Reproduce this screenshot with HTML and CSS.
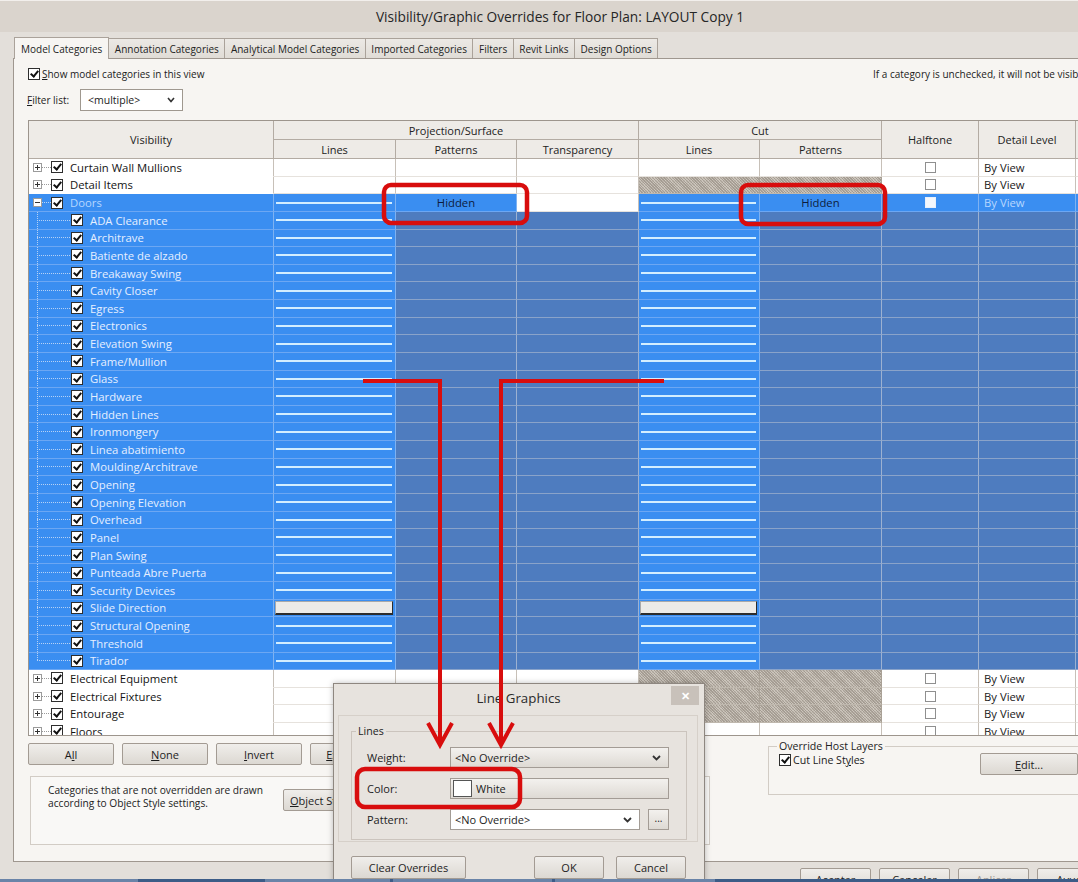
FILE: index.html
```html
<!DOCTYPE html>
<html>
<head>
<meta charset="utf-8">
<title>Visibility/Graphic Overrides</title>
<link rel="stylesheet" href="styles.css">
</head>
<body>
<div class="win">
  <div class="titlebar">Visibility/Graphic Overrides for Floor Plan: LAYOUT Copy 1</div>
  <div class="frame">
    <div class="tabs">
      <div class="tab active">Model Categories</div>
      <div class="tab">Annotation Categories</div>
      <div class="tab">Analytical Model Categories</div>
      <div class="tab">Imported Categories</div>
      <div class="tab">Filters</div>
      <div class="tab">Revit Links</div>
      <div class="tab">Design Options</div>
    </div>
    <div class="panel">
      <div class="toprow">
        <div class="showchk"><i class="cb"></i><span><u>S</u>how model categories in this view</span></div>
        <span class="note">If a category is unchecked, it will not be visible in the view.</span>
      </div>
      <div class="filter">
        <span class="flabel"><u>F</u>ilter list:</span>
        <div class="select"><span>&lt;multiple&gt;</span><svg class="chev" width="8" height="6" viewBox="0 0 8 6"><polyline points="1,1 4,4.5 7,1" fill="none" stroke="#333" stroke-width="1.6"/></svg></div>
      </div>
      <div class="grid">
        <div class="ghead">
          <div class="hc h-vis">Visibility</div>
          <div class="hc h-proj">Projection/Surface</div>
          <div class="hc h-cut">Cut</div>
          <div class="hc h-half">Halftone</div>
          <div class="hc h-det">Detail Level</div>
          <div class="hc h-ext"></div>
          <div class="hc h-l1">Lines</div>
          <div class="hc h-p1">Patterns</div>
          <div class="hc h-t1">Transparency</div>
          <div class="hc h-l2">Lines</div>
          <div class="hc h-p2">Patterns</div>
        </div>
        <div class="gbody">
          <div class="row"><div class="c vis w"><i class="ex"></i><i class="dl"></i><i class="cb"></i><span class="lb">Curtain Wall Mullions</span></div><div class="c w"></div><div class="c w"></div><div class="c w"></div><div class="c w"></div><div class="c w"></div><div class="c w ctr"><i class="hb"></i></div><div class="c w"><span class="bv">By View</span></div><div class="c w"></div></div>
          <div class="row"><div class="c vis w"><i class="ex"></i><i class="dl"></i><i class="cb"></i><span class="lb">Detail Items</span></div><div class="c w"></div><div class="c w"></div><div class="c w"></div><div class="c h"></div><div class="c h"></div><div class="c w ctr"><i class="hb"></i></div><div class="c w"><span class="bv">By View</span></div><div class="c w"></div></div>
          <div class="row sel"><div class="c vis b"><i class="ex open"></i><i class="dl"></i><i class="cb"></i><span class="lb doors">Doors</span></div><div class="c b"><i class="ln"></i></div><div class="c b"><span class="hid">Hidden</span></div><div class="c w"></div><div class="c b"><i class="ln"></i></div><div class="c b"><span class="hid">Hidden</span></div><div class="c b ctr"><i class="hb wb"></i></div><div class="c b"><span class="bv lt">By View</span></div><div class="c b"></div></div>
          <div class="row sel"><div class="c vis b"><i class="tr"></i><i class="cb"></i><span class="lb">ADA Clearance</span></div><div class="c b"><i class="ln"></i></div><div class="c d"></div><div class="c d"></div><div class="c b"><i class="ln"></i></div><div class="c d"></div><div class="c d"></div><div class="c d"></div><div class="c d"></div></div>
          <div class="row sel"><div class="c vis b"><i class="tr"></i><i class="cb"></i><span class="lb">Architrave</span></div><div class="c b"><i class="ln"></i></div><div class="c d"></div><div class="c d"></div><div class="c b"><i class="ln"></i></div><div class="c d"></div><div class="c d"></div><div class="c d"></div><div class="c d"></div></div>
          <div class="row sel"><div class="c vis b"><i class="tr"></i><i class="cb"></i><span class="lb">Batiente de alzado</span></div><div class="c b"><i class="ln"></i></div><div class="c d"></div><div class="c d"></div><div class="c b"><i class="ln"></i></div><div class="c d"></div><div class="c d"></div><div class="c d"></div><div class="c d"></div></div>
          <div class="row sel"><div class="c vis b"><i class="tr"></i><i class="cb"></i><span class="lb">Breakaway Swing</span></div><div class="c b"><i class="ln"></i></div><div class="c d"></div><div class="c d"></div><div class="c b"><i class="ln"></i></div><div class="c d"></div><div class="c d"></div><div class="c d"></div><div class="c d"></div></div>
          <div class="row sel"><div class="c vis b"><i class="tr"></i><i class="cb"></i><span class="lb">Cavity Closer</span></div><div class="c b"><i class="ln"></i></div><div class="c d"></div><div class="c d"></div><div class="c b"><i class="ln"></i></div><div class="c d"></div><div class="c d"></div><div class="c d"></div><div class="c d"></div></div>
          <div class="row sel"><div class="c vis b"><i class="tr"></i><i class="cb"></i><span class="lb">Egress</span></div><div class="c b"><i class="ln"></i></div><div class="c d"></div><div class="c d"></div><div class="c b"><i class="ln"></i></div><div class="c d"></div><div class="c d"></div><div class="c d"></div><div class="c d"></div></div>
          <div class="row sel"><div class="c vis b"><i class="tr"></i><i class="cb"></i><span class="lb">Electronics</span></div><div class="c b"><i class="ln"></i></div><div class="c d"></div><div class="c d"></div><div class="c b"><i class="ln"></i></div><div class="c d"></div><div class="c d"></div><div class="c d"></div><div class="c d"></div></div>
          <div class="row sel"><div class="c vis b"><i class="tr"></i><i class="cb"></i><span class="lb">Elevation Swing</span></div><div class="c b"><i class="ln"></i></div><div class="c d"></div><div class="c d"></div><div class="c b"><i class="ln"></i></div><div class="c d"></div><div class="c d"></div><div class="c d"></div><div class="c d"></div></div>
          <div class="row sel"><div class="c vis b"><i class="tr"></i><i class="cb"></i><span class="lb">Frame/Mullion</span></div><div class="c b"><i class="ln"></i></div><div class="c d"></div><div class="c d"></div><div class="c b"><i class="ln"></i></div><div class="c d"></div><div class="c d"></div><div class="c d"></div><div class="c d"></div></div>
          <div class="row sel"><div class="c vis b"><i class="tr"></i><i class="cb"></i><span class="lb">Glass</span></div><div class="c b"><i class="ln"></i></div><div class="c d"></div><div class="c d"></div><div class="c b"><i class="ln"></i></div><div class="c d"></div><div class="c d"></div><div class="c d"></div><div class="c d"></div></div>
          <div class="row sel"><div class="c vis b"><i class="tr"></i><i class="cb"></i><span class="lb">Hardware</span></div><div class="c b"><i class="ln"></i></div><div class="c d"></div><div class="c d"></div><div class="c b"><i class="ln"></i></div><div class="c d"></div><div class="c d"></div><div class="c d"></div><div class="c d"></div></div>
          <div class="row sel"><div class="c vis b"><i class="tr"></i><i class="cb"></i><span class="lb">Hidden Lines</span></div><div class="c b"><i class="ln"></i></div><div class="c d"></div><div class="c d"></div><div class="c b"><i class="ln"></i></div><div class="c d"></div><div class="c d"></div><div class="c d"></div><div class="c d"></div></div>
          <div class="row sel"><div class="c vis b"><i class="tr"></i><i class="cb"></i><span class="lb">Ironmongery</span></div><div class="c b"><i class="ln"></i></div><div class="c d"></div><div class="c d"></div><div class="c b"><i class="ln"></i></div><div class="c d"></div><div class="c d"></div><div class="c d"></div><div class="c d"></div></div>
          <div class="row sel"><div class="c vis b"><i class="tr"></i><i class="cb"></i><span class="lb">Linea abatimiento</span></div><div class="c b"><i class="ln"></i></div><div class="c d"></div><div class="c d"></div><div class="c b"><i class="ln"></i></div><div class="c d"></div><div class="c d"></div><div class="c d"></div><div class="c d"></div></div>
          <div class="row sel"><div class="c vis b"><i class="tr"></i><i class="cb"></i><span class="lb">Moulding/Architrave</span></div><div class="c b"><i class="ln"></i></div><div class="c d"></div><div class="c d"></div><div class="c b"><i class="ln"></i></div><div class="c d"></div><div class="c d"></div><div class="c d"></div><div class="c d"></div></div>
          <div class="row sel"><div class="c vis b"><i class="tr"></i><i class="cb"></i><span class="lb">Opening</span></div><div class="c b"><i class="ln"></i></div><div class="c d"></div><div class="c d"></div><div class="c b"><i class="ln"></i></div><div class="c d"></div><div class="c d"></div><div class="c d"></div><div class="c d"></div></div>
          <div class="row sel"><div class="c vis b"><i class="tr"></i><i class="cb"></i><span class="lb">Opening Elevation</span></div><div class="c b"><i class="ln"></i></div><div class="c d"></div><div class="c d"></div><div class="c b"><i class="ln"></i></div><div class="c d"></div><div class="c d"></div><div class="c d"></div><div class="c d"></div></div>
          <div class="row sel"><div class="c vis b"><i class="tr"></i><i class="cb"></i><span class="lb">Overhead</span></div><div class="c b"><i class="ln"></i></div><div class="c d"></div><div class="c d"></div><div class="c b"><i class="ln"></i></div><div class="c d"></div><div class="c d"></div><div class="c d"></div><div class="c d"></div></div>
          <div class="row sel"><div class="c vis b"><i class="tr"></i><i class="cb"></i><span class="lb">Panel</span></div><div class="c b"><i class="ln"></i></div><div class="c d"></div><div class="c d"></div><div class="c b"><i class="ln"></i></div><div class="c d"></div><div class="c d"></div><div class="c d"></div><div class="c d"></div></div>
          <div class="row sel"><div class="c vis b"><i class="tr"></i><i class="cb"></i><span class="lb">Plan Swing</span></div><div class="c b"><i class="ln"></i></div><div class="c d"></div><div class="c d"></div><div class="c b"><i class="ln"></i></div><div class="c d"></div><div class="c d"></div><div class="c d"></div><div class="c d"></div></div>
          <div class="row sel"><div class="c vis b"><i class="tr"></i><i class="cb"></i><span class="lb">Punteada Abre Puerta</span></div><div class="c b"><i class="ln"></i></div><div class="c d"></div><div class="c d"></div><div class="c b"><i class="ln"></i></div><div class="c d"></div><div class="c d"></div><div class="c d"></div><div class="c d"></div></div>
          <div class="row sel"><div class="c vis b"><i class="tr"></i><i class="cb"></i><span class="lb">Security Devices</span></div><div class="c b"><i class="ln"></i></div><div class="c d"></div><div class="c d"></div><div class="c b"><i class="ln"></i></div><div class="c d"></div><div class="c d"></div><div class="c d"></div><div class="c d"></div></div>
          <div class="row sel"><div class="c vis b"><i class="tr"></i><i class="cb"></i><span class="lb">Slide Direction</span></div><div class="c b"><i class="fld"></i></div><div class="c d"></div><div class="c d"></div><div class="c b"><i class="fld"></i></div><div class="c d"></div><div class="c d"></div><div class="c d"></div><div class="c d"></div></div>
          <div class="row sel"><div class="c vis b"><i class="tr"></i><i class="cb"></i><span class="lb">Structural Opening</span></div><div class="c b"><i class="ln"></i></div><div class="c d"></div><div class="c d"></div><div class="c b"><i class="ln"></i></div><div class="c d"></div><div class="c d"></div><div class="c d"></div><div class="c d"></div></div>
          <div class="row sel"><div class="c vis b"><i class="tr"></i><i class="cb"></i><span class="lb">Threshold</span></div><div class="c b"><i class="ln"></i></div><div class="c d"></div><div class="c d"></div><div class="c b"><i class="ln"></i></div><div class="c d"></div><div class="c d"></div><div class="c d"></div><div class="c d"></div></div>
          <div class="row sel"><div class="c vis b"><i class="tr last"></i><i class="cb"></i><span class="lb">Tirador</span></div><div class="c b"><i class="ln"></i></div><div class="c d"></div><div class="c d"></div><div class="c b"><i class="ln"></i></div><div class="c d"></div><div class="c d"></div><div class="c d"></div><div class="c d"></div></div>
          <div class="row"><div class="c vis w"><i class="ex"></i><i class="dl"></i><i class="cb"></i><span class="lb">Electrical Equipment</span></div><div class="c w"></div><div class="c w"></div><div class="c w"></div><div class="c h"></div><div class="c h"></div><div class="c w ctr"><i class="hb"></i></div><div class="c w"><span class="bv">By View</span></div><div class="c w"></div></div>
          <div class="row"><div class="c vis w"><i class="ex"></i><i class="dl"></i><i class="cb"></i><span class="lb">Electrical Fixtures</span></div><div class="c w"></div><div class="c w"></div><div class="c w"></div><div class="c h"></div><div class="c h"></div><div class="c w ctr"><i class="hb"></i></div><div class="c w"><span class="bv">By View</span></div><div class="c w"></div></div>
          <div class="row"><div class="c vis w"><i class="ex"></i><i class="dl"></i><i class="cb"></i><span class="lb">Entourage</span></div><div class="c w"></div><div class="c w"></div><div class="c w"></div><div class="c h"></div><div class="c h"></div><div class="c w ctr"><i class="hb"></i></div><div class="c w"><span class="bv">By View</span></div><div class="c w"></div></div>
          <div class="row"><div class="c vis w"><i class="ex"></i><i class="dl"></i><i class="cb"></i><span class="lb">Floors</span></div><div class="c w"></div><div class="c w"></div><div class="c w"></div><div class="c w"></div><div class="c w"></div><div class="c w ctr"><i class="hb"></i></div><div class="c w"><span class="bv">By View</span></div><div class="c w"></div></div>
        </div>
      </div>
      <div class="bottom">
        <div class="bleft">
          <div class="btnrow">
            <div class="btn">A<u>l</u>l</div>
            <div class="btn"><u>N</u>one</div>
            <div class="btn"><u>I</u>nvert</div>
            <div class="btn"><u>E</u>xpand All</div>
          </div>
          <div class="infobox">
            <p>Categories that are not overridden are drawn<br>according to Object Style settings.</p>
            <div class="btn objbtn"><u>O</u>bject Styles...</div>
          </div>
        </div>
        <fieldset class="host">
          <legend>Override Host Layers</legend>
          <div class="hostrow">
            <div class="hostchk"><i class="cb"></i><span>Cut Line St<u>y</u>les</span></div>
            <div class="btn editbtn"><u>E</u>dit...</div>
          </div>
        </fieldset>
      </div>
    </div>
    <div class="footer">
      <div class="btn fbtn">Aceptar</div>
      <div class="btn fbtn">Cancelar</div>
      <div class="btn fbtn dis">Aplicar</div>
      <div class="btn fbtn">Ayuda</div>
    </div>
  </div>
</div>

<div class="dlg">
  <div class="dtitle"><span class="dsp"></span><span class="dt">Line Graphics</span><span class="dx">&#x2715;</span></div>
  <div class="dpanel">
    <fieldset class="lines">
      <legend>Lines</legend>
      <div class="lgrid">
        <span class="dl1">Weight:</span>
        <div class="dsel"><span>&lt;No Override&gt;</span><svg class="chev" width="9" height="6" viewBox="0 0 9 6"><polyline points="1,1 4.5,4.5 8,1" fill="none" stroke="#333" stroke-width="1.8"/></svg></div>
        <span class="dl1">Color:</span>
        <div class="dsel colbtn"><i class="sw"></i><span>White</span></div>
        <span class="dl1">Pattern:</span>
        <div class="patrow">
          <div class="dsel white"><span>&lt;No Override&gt;</span><svg class="chev" width="9" height="6" viewBox="0 0 9 6"><polyline points="1,1 4.5,4.5 8,1" fill="none" stroke="#333" stroke-width="1.8"/></svg></div>
          <div class="dots">...</div>
        </div>
      </div>
    </fieldset>
  </div>
  <div class="dbtns">
    <div class="btn clr">Clear Overrides</div>
    <span class="dfill"></span>
    <div class="btn okb">OK</div>
    <div class="btn okb">Cancel</div>
  </div>
</div>

<svg class="marks" width="1078" height="882" viewBox="0 0 1078 882">
  <g fill="none" stroke="#d80d0d" stroke-width="4.5" stroke-linejoin="round">
    <rect x="384" y="185" width="143" height="38" rx="7"/>
    <rect x="741" y="185" width="144" height="39" rx="7"/>
    <rect x="357" y="769" width="163" height="38" rx="8"/>
  </g>
  <g fill="none" stroke="#d80d0d" stroke-width="4">
    <polyline points="363,381 440,381 440,744"/>
    <polyline points="664,381 501,381 501,744"/>
    <polyline points="428,723 440,745 452,723"/>
    <polyline points="489,723 501,745 513,723"/>
  </g>
</svg>

<div class="taskbar"><i class="seg s1"></i><i class="seg s2"></i><i class="seg s3"></i><i class="seg s4"></i></div>
</body>
</html>
```

FILE: styles.css
```css
html, body {
  margin: 0;
  padding: 0;
}
body {
  width: 1078px;
  height: 882px;
  overflow: hidden;
  position: relative;
  background: #e1ddd8;
  font-family: "Open Sans", "Noto Sans", sans-serif;
  color: #1b1b1b;
}
i { display: block; font-style: normal; }
u { text-decoration: underline; text-underline-offset: 1px; }

.win {
  width: 1120px;
}
.titlebar {
  height: 32px;
  box-sizing: border-box;
  border-top: 1px solid #f2efec;
  background: #dad4cd;
  display: flex;
  align-items: center;
  justify-content: center;
  font-size: 13.7px;
  color: #262626;
}
.frame {
  background: #e3dfda;
  padding: 6px 0 0 13px;
  height: 850px;
  box-sizing: border-box;
}

/* tabs */
.tabs {
  display: flex;
  height: 20px;
  margin-left: 1px;
  position: relative;
  z-index: 2;
}
.tab {
  font-size: 10px;
  height: 20px;
  box-sizing: border-box;
  padding: 0 5.5px;
  display: flex;
  align-items: center;
  border: 1px solid #aaa29a;
  border-bottom: none;
  border-left: none;
  background: linear-gradient(#ece9e5, #e0dcd6);
  color: #222;
  white-space: nowrap;
}
.tab.active {
  background: #f7f5f2;
  border-left: 1px solid #aaa29a;
  height: 22px;
  margin-top: -1px;
  padding: 0 6px;
  margin-bottom: -1px;
}

/* panel */
.panel {
  width: 1107px;
  height: 804px;
  box-sizing: border-box;
  border: 1px solid #9f978f;
  background: #f7f5f2;
  padding-left: 14px;
  overflow: hidden;
}
.toprow {
  margin-top: 7px;
  height: 16px;
  display: flex;
  align-items: center;
  font-size: 10px;
}
.showchk {
  flex: 0 0 845px;
  display: flex;
  align-items: center;
  gap: 2px;
}
.note { white-space: nowrap; }

.filter {
  margin-top: 7px;
  height: 22px;
  display: flex;
  align-items: center;
  font-size: 10px;
}
.flabel {
  width: 53px;
  margin-left: -1px;
}
.select {
  width: 103px;
  height: 22px;
  box-sizing: border-box;
  border: 1px solid #9f988f;
  background: #fff;
  display: flex;
  align-items: center;
  justify-content: space-between;
  padding: 0 7px 0 7px;
  font-size: 10.5px;
}

/* checkbox */
.cb {
  width: 12px;
  height: 12px;
  box-sizing: border-box;
  border: 1px solid #2e2e2e;
  background: #fff;
  position: relative;
  flex: none;
}
.cb::after {
  content: "";
  position: absolute;
  left: 3px;
  top: 0px;
  width: 3px;
  height: 6px;
  border: solid #111;
  border-width: 0 2px 2px 0;
  transform: rotate(40deg);
}

/* grid */
.grid {
  margin-top: 9px;
  width: 1171px;
  border: 1px solid #9d958d;
  border-right: none;
  background: #fff;
}
.ghead {
  display: grid;
  grid-template-columns: 245px 122px 121px 122px 121px 122px 97px 97px 124px;
  grid-template-rows: 19px 19px;
  background: #eeebe7;
  font-size: 11px;
  color: #222;
}
.hc {
  box-sizing: border-box;
  border-right: 1px solid #b3aba3;
  border-bottom: 1px solid #b3aba3;
  display: flex;
  align-items: center;
  justify-content: center;
  white-space: nowrap;
}
.h-vis { grid-column: 1; grid-row: 1 / span 2; }
.h-proj { grid-column: 2 / span 3; grid-row: 1; }
.h-cut { grid-column: 5 / span 2; grid-row: 1; }
.h-half { grid-column: 7; grid-row: 1 / span 2; }
.h-det { grid-column: 8; grid-row: 1 / span 2; }
.h-ext { grid-column: 9; grid-row: 1 / span 2; }
.h-l1 { grid-column: 2; grid-row: 2; }
.h-p1 { grid-column: 3; grid-row: 2; }
.h-t1 { grid-column: 4; grid-row: 2; }
.h-l2 { grid-column: 5; grid-row: 2; }
.h-p2 { grid-column: 6; grid-row: 2; }

.gbody {
  height: 576px;
  overflow: hidden;
}
.row {
  display: grid;
  grid-template-columns: 245px 122px 121px 122px 121px 122px 97px 97px 124px;
  height: 17.625px;
  font-size: 11.3px;
}
.c {
  box-sizing: border-box;
  border-right: 1px solid #c7c0b8;
  border-bottom: 1px solid #e6e2dd;
  display: flex;
  align-items: center;
  min-width: 0;
  overflow: hidden;
  white-space: nowrap;
}
.w { background: #fff; }
.vis.w { border-bottom-color: #fff; }
.h {
  background-color: #bfb8ae;
  background-image:
    repeating-linear-gradient(45deg, rgba(140,131,121,0.55) 0 1px, transparent 1px 2px),
    repeating-linear-gradient(-45deg, rgba(220,214,206,0.45) 0 1px, transparent 1px 2px);
  border-right-color: #a9a196;
  border-bottom-color: #bfb8ae;
}
.b {
  background: #3a8ef1;
  border-right-color: #7eb2f2;
  border-bottom-color: #6ca7f3;
}
.d {
  background: #4e7cbf;
  border-right-color: #9cb1d1;
  border-bottom-color: #8aa3c9;
}
.ctr { justify-content: center; }

.vis { padding-left: 4px; }
.lb { margin-left: 7px; color: #141414; }
.sel .lb { color: #e6efff; }
.sel .lb.doors { color: #b7d7ff; }

.ex {
  width: 9px;
  height: 9px;
  box-sizing: border-box;
  border: 1px solid #9b9b9b;
  background: #fff;
  position: relative;
  flex: none;
}
.ex::before {
  content: "";
  position: absolute;
  left: 1px;
  top: 3px;
  width: 5px;
  height: 1px;
  background: #333;
}
.ex::after {
  content: "";
  position: absolute;
  left: 3px;
  top: 1px;
  width: 1px;
  height: 5px;
  background: #333;
}
.ex.open::after { display: none; }
.dl {
  width: 9px;
  height: 1px;
  flex: none;
  background: repeating-linear-gradient(to right, #9a9a9a 0 1px, transparent 1px 2px);
}
.sel .dl {
  background: repeating-linear-gradient(to right, #bcd6f6 0 1px, transparent 1px 2px);
}
.tr {
  margin-left: 4px;
  width: 34px;
  flex: none;
  align-self: stretch;
  background:
    repeating-linear-gradient(to bottom, #b6d1f5 0 1px, transparent 1px 2px) left top / 1px 100% no-repeat,
    repeating-linear-gradient(to right, #b6d1f5 0 1px, transparent 1px 2px) left center / 100% 1px no-repeat;
}
.tr.last {
  background:
    repeating-linear-gradient(to bottom, #b6d1f5 0 1px, transparent 1px 2px) left top / 1px 50% no-repeat,
    repeating-linear-gradient(to right, #b6d1f5 0 1px, transparent 1px 2px) left center / 100% 1px no-repeat;
}

.ln {
  flex: 1;
  height: 2px;
  margin: 0 3px 0 2px;
  background: #d3eeff;
}
.fld {
  flex: 1;
  height: 14px;
  margin: 0 2px 0 1px;
  box-sizing: border-box;
  background: #ecebe8;
  border: 1px solid #a9a9a9;
  border-bottom: 2px solid #2c2c2c;
  border-right: 1px solid #2c2c2c;
}
.hid {
  flex: 1;
  text-align: center;
  color: #0d1c3d;
  font-size: 11.3px;
}
.hb {
  width: 11px;
  height: 11px;
  box-sizing: border-box;
  border: 1px solid #8f8f8f;
  background: #fff;
}
.hb.wb { border-color: #e8f0fb; background: #f4f7fc; }
.bv { padding-left: 5px; color: #1a1a1a; }
.bv.lt { color: #b7d7ff; }

/* bottom area */
.bottom {
  margin-top: 7px;
  display: flex;
}
.bleft {
  width: 740px;
  flex: none;
}
.btnrow {
  display: flex;
  gap: 8px;
  height: 22px;
}
.btn {
  box-sizing: border-box;
  border: 1px solid #a39b93;
  border-radius: 2px;
  background: linear-gradient(#f0eeeb, #dcd8d2);
  display: flex;
  align-items: center;
  justify-content: center;
  font-size: 11px;
  color: #1d1d1d;
  white-space: nowrap;
}
.btnrow .btn { width: 86px; height: 22px; }
.infobox {
  margin-top: 11px;
  margin-left: 2px;
  width: 680px;
  height: 69px;
  box-sizing: border-box;
  border: 1px solid #d2ccc5;
  background: #f9f8f6;
  display: flex;
  align-items: flex-start;
  padding-left: 17px;
}
.infobox p {
  margin: 7px 0 0 0;
  width: 220px;
  flex: none;
  font-size: 10.2px;
  line-height: 13px;
  color: #222;
  white-space: nowrap;
}
.objbtn {
  margin-top: 12px;
  margin-left: 15px;
  width: 104px;
  height: 22px;
  justify-content: flex-start;
  padding-left: 6px;
}
.host {
  margin: -4px 0 0 0;
  padding: 2px 0 0 10px;
  border: 1px solid #d2ccc5;
  height: 56px;
  box-sizing: border-box;
  width: 400px;
}
.host legend {
  font-size: 10.6px;
  padding: 0 2px;
  margin-left: -2px;
  line-height: 14px;
  color: #222;
}
.hostrow {
  display: flex;
  align-items: flex-start;
}
.hostchk {
  width: 201px;
  flex: none;
  display: flex;
  align-items: center;
  gap: 2px;
  font-size: 10.6px;
  height: 12px;
  margin-top: -1px;
}
.editbtn {
  width: 98px;
  height: 22px;
  margin-top: -2px;
}

.footer {
  display: flex;
  gap: 8px;
  padding: 6px 0 0 787px;
}
.fbtn { width: 71px; height: 22px; }
.fbtn.dis { color: #9a958f; }

/* dialog */
.dlg {
  position: absolute;
  left: 333px;
  top: 683px;
  width: 372px;
  height: 215px;
  box-sizing: border-box;
  border: 1px solid #8e8780;
  background: #e7e3de;
  box-shadow: 0 0 6px rgba(0,0,0,0.25);
  z-index: 5;
}
.dtitle {
  height: 28px;
  display: flex;
  align-items: center;
  padding: 0 5px;
}
.dsp { width: 27px; }
.dt {
  flex: 1;
  text-align: center;
  font-size: 13.3px;
  color: #2a2a2a;
}
.dx {
  width: 28px;
  height: 19px;
  align-self: flex-start;
  margin-top: 2px;
  background: #c8c1ba;
  color: #fff;
  font-size: 11px;
  font-weight: bold;
  display: flex;
  align-items: center;
  justify-content: center;
}
.dpanel {
  margin: 3px 6px 0 4px;
  height: 127px;
  box-sizing: border-box;
  border: 1px solid #d6d0c9;
  padding: 8px 0 0 12px;
}
.lines {
  margin: 0;
  width: 336px;
  box-sizing: border-box;
  border: 1px solid #cbc4bd;
  padding: 9px 0 9px 15px;
}
.lines legend {
  font-size: 10.6px;
  line-height: 14px;
  padding: 0 2px;
  margin-left: -11px;
  color: #222;
}
.lgrid {
  display: grid;
  grid-template-columns: 83px 219px;
  grid-auto-rows: 21px;
  row-gap: 10px;
  align-items: center;
}
.dl1 { font-size: 11px; color: #222; }
.dsel {
  height: 21px;
  box-sizing: border-box;
  border: 1px solid #a39c95;
  background: linear-gradient(#f3f1ee, #dedad4);
  display: flex;
  align-items: center;
  justify-content: space-between;
  padding: 0 7px 0 4px;
  font-size: 11px;
  color: #1d1d1d;
}
.dsel.white { background: #fff; width: 190px; }
.colbtn {
  justify-content: flex-start;
  padding-left: 2px;
  gap: 4px;
}
.sw {
  width: 19px;
  height: 17px;
  box-sizing: border-box;
  border: 1px solid #555;
  background: #fff;
}
.patrow {
  display: flex;
  gap: 8px;
}
.dots {
  width: 21px;
  height: 21px;
  box-sizing: border-box;
  border: 1px solid #a39c95;
  background: linear-gradient(#f3f1ee, #dedad4);
  font-size: 10px;
  display: flex;
  align-items: center;
  justify-content: center;
  padding-bottom: 3px;
}
.dbtns {
  display: flex;
  margin: 14px 18px 0 17px;
  gap: 12px;
}
.dfill { flex: 1; }
.clr { width: 115px; height: 23px; }
.okb { width: 70px; height: 23px; }

/* annotations */
.marks {
  position: absolute;
  left: 0;
  top: 0;
  z-index: 10;
  pointer-events: none;
}

.taskbar {
  position: absolute;
  left: 0;
  bottom: 0;
  width: 1078px;
  height: 3px;
  background: #3c5c87;
  z-index: 20;
  display: flex;
}
.seg { height: 3px; background: #6a84a8; }
.s1 { width: 138px; }
.s2 { width: 125px; margin-left: 127px; }
.s3 { width: 159px; margin-left: 3px; }
.s4 { width: 160px; margin-left: 3px; }
```
